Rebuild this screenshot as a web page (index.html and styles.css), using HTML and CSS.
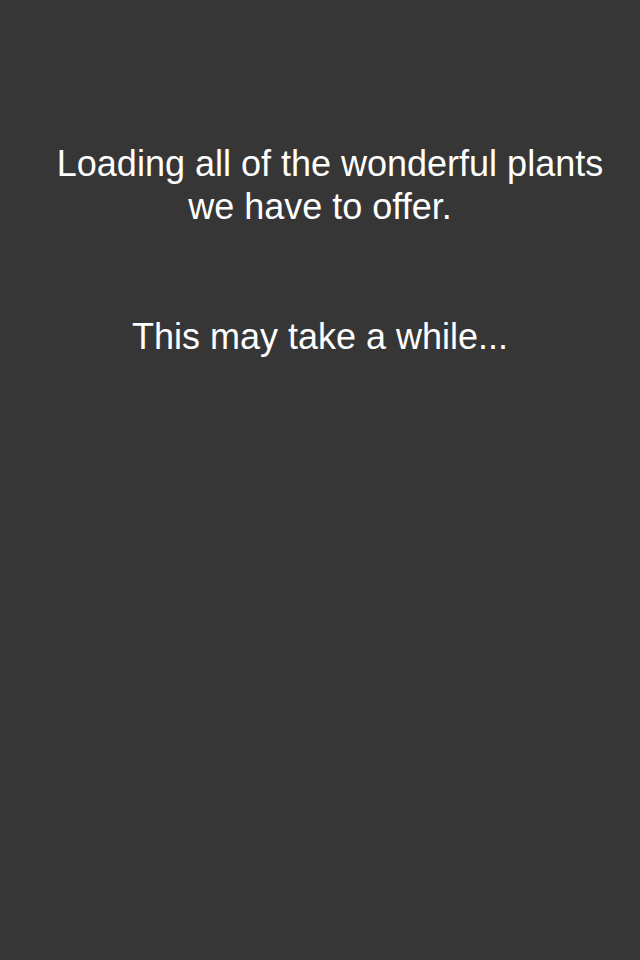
FILE: index.html
```html
<!DOCTYPE html>
<html>
<head>
<meta charset="utf-8">
<link rel="stylesheet" href="styles.css">
</head>
<body>
<main class="loading">
  <p class="msg msg-main"><span class="line line-first">Loading all of the wonderful plants</span><span class="line">we have to offer.</span></p>
  <p class="msg msg-wait">This may take a while...</p>
</main>
</body>
</html>
```
FILE: styles.css
```css
html, body {
  margin: 0;
  padding: 0;
  background: #363636;
  height: 100%;
}
.loading {
  display: flex;
  flex-direction: column;
  align-items: center;
  padding-top: 142px;
  color: #ffffff;
  font-family: "Liberation Sans", Arial, sans-serif;
  font-size: 36px;
  line-height: 43px;
}
.msg {
  margin: 0;
  text-align: center;
  white-space: nowrap;
}
.msg-main {
  display: flex;
  flex-direction: column;
  align-items: center;
}
.line {
  display: block;
}
.line-first {
  padding-left: 20px;
}
.msg-wait {
  margin-top: 87px;
}
```
